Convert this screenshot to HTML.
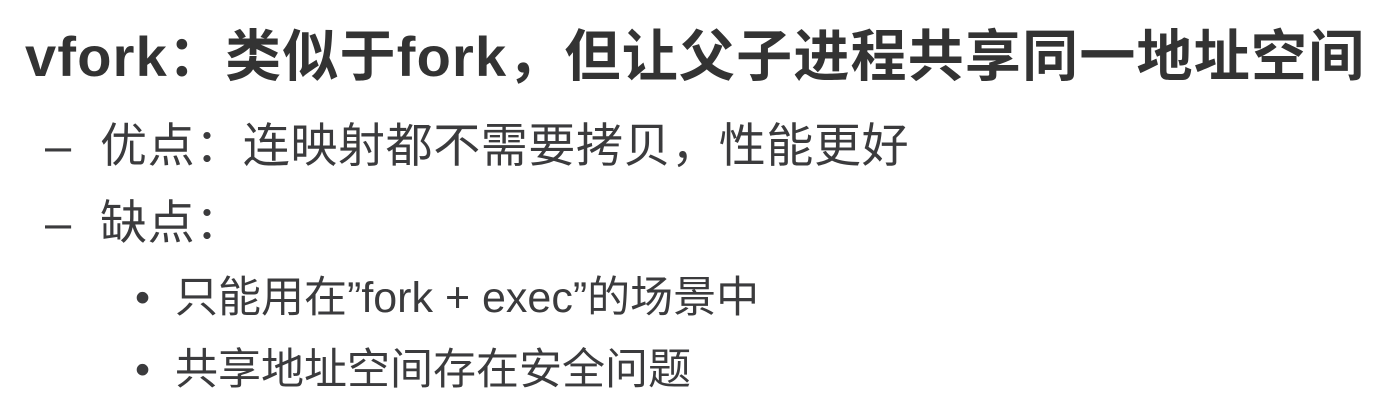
<!DOCTYPE html>
<html><head><meta charset="utf-8"><style>
body{margin:0;width:1382px;height:416px;background:#fff;overflow:hidden;position:relative;font-family:"Liberation Sans","Noto Sans CJK SC",sans-serif;color:#3b3b3d}
div{position:absolute;white-space:nowrap;line-height:1}
.t{left:25px;top:29px;font-size:56px;font-weight:bold;color:#333;letter-spacing:1.2px}
.l{font-size:47px;letter-spacing:0.6px}
.s{font-size:43px}
</style></head><body>
<div class="t">vfork：类似于fork，但让父子进程共享同一地址空间</div>
<div class="l" style="left:45px;top:122px">–</div>
<div class="l" style="left:100px;top:122px">优点：连映射都不需要拷贝，性能更好</div>
<div class="l" style="left:45px;top:199px">–</div>
<div class="l" style="left:100px;top:199px">缺点：</div>
<div class="s" style="left:135px;top:277px">•</div>
<div class="s" style="left:175px;top:277px">只能用在”fork + exec”的场景中</div>
<div class="s" style="left:135px;top:349px">•</div>
<div class="s" style="left:175px;top:349px">共享地址空间存在安全问题</div>
</body></html>
